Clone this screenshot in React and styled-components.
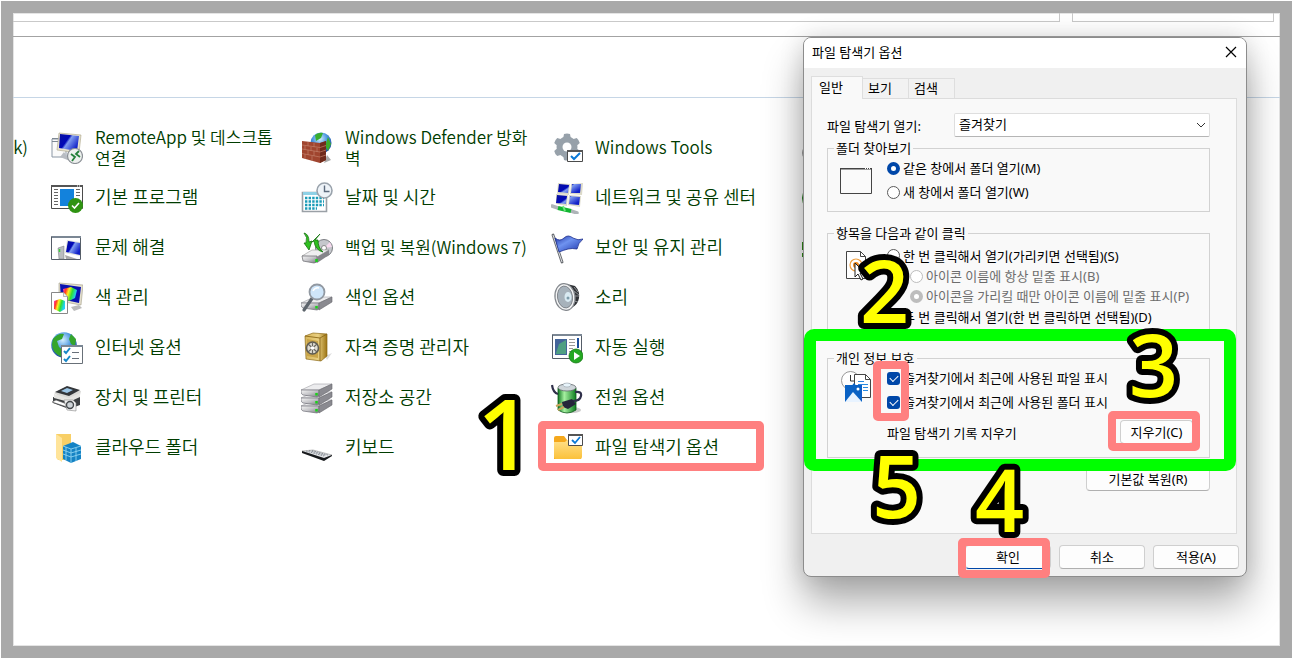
import React from 'react';
import styled, { createGlobalStyle } from 'styled-components';

const GlobalStyle = createGlobalStyle`
  * {
    box-sizing: border-box;
  }

  body {
    margin: 0;
    background: #fff;
    font-family: 'Noto Sans', 'Noto Sans CJK KR', sans-serif;
  }
`;

const Page = styled.div`
  height: 100vh;
  padding: 1px 1px 2px;
`;

const Frame = styled.main`
  position: relative;
  height: 100%;
  overflow: hidden;
  border: 12px solid #a9a9a9;
  background: #fff;
  box-shadow: inset 0 0 0 1px #e4e4e4;
`;

const TopStrip = styled.div`
  display: flex;
  gap: 12px;
  height: 24px;
  padding: 0 6px 14px 0;
  border-bottom: 1px solid #a3a3a3;
`;

const StripBox = styled.div`
  flex: ${(props) => (props.$fill ? '1' : '0 0 202px')};
  border: 1px solid #c9c9c9;
  border-top: 0;
  border-left-width: ${(props) => (props.$fill ? '0' : '1px')};
`;

const Banner = styled.div`
  height: 61px;
  border-bottom: 1px solid #c6d6e6;
`;

const ItemGrid = styled.div`
  display: grid;
  grid-template-columns: 38px repeat(4, 250px);
  grid-template-rows: repeat(7, 50px);
  grid-auto-flow: column;
  padding-top: 25px;
  color: #003c00;
  font-family: 'Noto Sans CJK KR', 'Noto Sans', sans-serif;
  font-size: 18px;
  font-weight: 350;
`;

const CutItem = styled.div`
  display: flex;
  grid-row: 1 / 8;
  justify-content: flex-end;
  height: 48px;
  padding-right: 23px;
  overflow: hidden;
  font-size: 17px;
  line-height: 48px;
`;

const Item = styled.a`
  position: relative;
  display: flex;
  align-items: center;
  gap: 12px;
  color: inherit;
  line-height: 21px;
  text-decoration: none;
  white-space: pre-line;
`;

const ItemText = styled.span`
  padding-bottom: 3px;
  font-size: ${(props) => (props.$latin ? 17 : 18)}px;
`;

const ItemIcon = styled.svg`
  flex: none;
  width: 32px;
  height: 32px;
`;

const Highlight = styled.div`
  position: absolute;
  left: ${(props) => props.$left}px;
  top: ${(props) => props.$top}px;
  width: ${(props) => props.$width}px;
  height: ${(props) => props.$height}px;
  border: ${(props) => (props.$green ? '12px solid #00ff00' : '8px solid #ff8080')};
  border-radius: ${(props) => (props.$green ? 10 : 5)}px;
  pointer-events: none;
`;

const StepSvg = styled.svg`
  position: absolute;
  left: ${(props) => props.$left}px;
  top: ${(props) => props.$top}px;
  width: 70px;
  height: 90px;
  overflow: visible;
  pointer-events: none;

  text {
    fill: #ffff00;
    stroke: #000;
    stroke-width: 12px;
    stroke-linejoin: round;
    paint-order: stroke;
    font-family: 'Open Sans', 'Noto Sans', sans-serif;
    font-weight: 600;
  }
`;

const Dialog = styled.section`
  position: absolute;
  top: 24px;
  right: 33px;
  width: 444px;
  border: 1px solid #8c8c8c;
  border-radius: 8px;
  background: #f0f0f0;
  box-shadow: 0 26px 40px rgba(0, 0, 0, 0.32), 0 0 24px rgba(0, 0, 0, 0.14);
  color: #000;
  font-size: 13px;
`;

const TitleBar = styled.header`
  display: flex;
  align-items: center;
  justify-content: space-between;
  height: 30px;
  padding: 0 8px 2px;
  border-radius: 7px 7px 0 0;
  background: #fff;
`;

const Title = styled.h1`
  margin: 0;
  font-size: 13px;
  font-weight: 400;
  line-height: 18px;
`;

const CloseButton = styled.button`
  display: flex;
  padding: 1px;
  border: 0;
  background: none;
`;

const TabList = styled.div`
  display: flex;
  align-items: flex-end;
  height: 30px;
  padding: 8px 7px 0;
`;

const Tab = styled.button`
  z-index: ${(props) => (props.$active ? 1 : 0)};
  width: ${(props) => (props.$active ? 52 : 46)}px;
  height: ${(props) => (props.$active ? 23 : 20)}px;
  margin-bottom: ${(props) => (props.$active ? -1 : 0)}px;
  padding: 0 0 2px ${(props) => (props.$active ? 7 : 5)}px;
  border: 1px solid #dedede;
  border-bottom: 0;
  border-left-width: ${(props) => (props.$active ? 1 : 0)}px;
  background: ${(props) => (props.$active ? '#f9f9f9' : '#f2f2f2')};
  color: #000;
  font: inherit;
  line-height: 18px;
  text-align: left;
`;

const TabPanel = styled.div`
  margin: 0 9px 0 7px;
  padding: 14px 26px 42px 15px;
  border: 1px solid #dcdcdc;
  background: #f9f9f9;
`;

const OpenRow = styled.div`
  display: flex;
  align-items: center;
  justify-content: space-between;
  height: 24px;
  margin-bottom: 3px;
`;

const SelectBox = styled.div`
  position: relative;
  width: 256px;

  select {
    display: block;
    width: 100%;
    height: 24px;
    padding: 0 4px 2px;
    appearance: none;
    border: 1px solid #dedede;
    border-bottom-color: #b5b5b5;
    border-radius: 2px;
    background: #fff;
    color: #000;
    font: inherit;
  }

  svg {
    position: absolute;
    top: 8px;
    right: 4px;
    pointer-events: none;
  }
`;

const Group = styled.fieldset`
  min-width: 0;
  margin: 0 0 13px;
  padding: 0 16px ${(props) => props.$bottom || 7}px 12px;
  border: 1px solid #d2d2d2;

  legend {
    height: 16px;
    margin-left: -6px;
    padding: 0 2px;
    line-height: 16px;
  }
`;

const GroupBody = styled.div`
  display: flex;
  gap: 15px;
  padding-top: ${(props) => props.$top || 0}px;
`;

const GroupIcon = styled.svg`
  flex: none;
  width: 32px;
  height: 40px;
`;

const Options = styled.div`
  flex: 1;
  min-width: 0;
`;

const Option = styled.label`
  display: flex;
  align-items: center;
  gap: 3px;
  height: ${(props) => props.$height || 24}px;
  padding-left: ${(props) => (props.$sub ? 23 : 0)}px;
  color: ${(props) => (props.$sub ? '#6d6d6d' : '#000')};
  line-height: 16px;
  white-space: nowrap;
`;

const Radio = styled.input`
  flex: none;
  width: 13px;
  height: 13px;
  margin: 0;
  appearance: none;
  border: 1px solid #5a5a5a;
  border-radius: 50%;
  background: #fff;

  &:checked {
    border: 4px solid #0047a8;
  }

  &:disabled {
    border-color: #bdbdbd;
  }
`;

const Checkbox = styled.input`
  position: relative;
  flex: none;
  width: 13px;
  height: 13px;
  margin: 0;
  appearance: none;
  border-radius: 3px;
  background: #0047a8;

  &:checked::after {
    content: '';
    position: absolute;
    left: 3px;
    top: 3px;
    width: 7px;
    height: 4px;
    border: solid #fff;
    border-width: 0 0 1px 1px;
    transform: rotate(-45deg);
  }
`;

const ClearRow = styled.div`
  display: flex;
  align-items: center;
  justify-content: space-between;
  margin-top: 6px;
`;

const Button = styled.button`
  width: ${(props) => props.$width || 86}px;
  height: 24px;
  padding: 0 0 2px;
  border: 1px solid #cfcfcf;
  border-bottom-color: ${(props) => (props.$primary ? '#0047a8' : '#b0b0b0')};
  border-radius: 4px;
  background: #fdfdfd;
  color: #000;
  font: inherit;
`;

const RestoreRow = styled.div`
  display: flex;
  justify-content: flex-end;
  margin-top: -4px;
`;

const Footer = styled.footer`
  display: flex;
  justify-content: flex-end;
  gap: 8px;
  padding: 11px 7px 7px;
`;

const gradients = (
  <svg width="0" height="0" style={{ position: 'absolute' }} aria-hidden="true">
    <defs>
      <linearGradient id="screen" x1="0" y1="0" x2="1" y2="0.6">
        <stop offset="0" stopColor="#0a12a0" />
        <stop offset="0.45" stopColor="#0008b8" />
        <stop offset="0.55" stopColor="#7f9cf0" />
        <stop offset="1" stopColor="#1020c8" />
      </linearGradient>
      <radialGradient id="globe" cx="0.45" cy="0.3" r="0.75">
        <stop offset="0" stopColor="#d4f0ff" />
        <stop offset="0.45" stopColor="#4d98e0" />
        <stop offset="1" stopColor="#123a94" />
      </radialGradient>
      <linearGradient id="metal" x1="0" y1="0" x2="1" y2="1">
        <stop offset="0" stopColor="#f6f6f6" />
        <stop offset="0.5" stopColor="#c4c4c8" />
        <stop offset="1" stopColor="#77777d" />
      </linearGradient>
      <linearGradient id="folder" x1="0" y1="0" x2="0" y2="1">
        <stop offset="0" stopColor="#ffe08a" />
        <stop offset="1" stopColor="#fbc13a" />
      </linearGradient>
      <linearGradient id="gold" x1="0" y1="0" x2="1" y2="0">
        <stop offset="0" stopColor="#d8b75c" />
        <stop offset="0.6" stopColor="#e9cf80" />
        <stop offset="1" stopColor="#9c7414" />
      </linearGradient>
      <linearGradient id="green" x1="0" y1="0" x2="1" y2="0">
        <stop offset="0" stopColor="#127a24" />
        <stop offset="0.35" stopColor="#a6f0a0" />
        <stop offset="1" stopColor="#0d7d1f" />
      </linearGradient>
      <linearGradient id="rainbow" x1="0" y1="0" x2="1" y2="0.3">
        <stop offset="0" stopColor="#ff38e0" />
        <stop offset="0.25" stopColor="#ff3b20" />
        <stop offset="0.45" stopColor="#ffee20" />
        <stop offset="0.7" stopColor="#30e030" />
        <stop offset="1" stopColor="#20d0ff" />
      </linearGradient>
      <linearGradient id="flag" x1="0" y1="0" x2="1" y2="1">
        <stop offset="0" stopColor="#1c2fa0" />
        <stop offset="0.4" stopColor="#6f93f0" />
        <stop offset="1" stopColor="#1830a8" />
      </linearGradient>
    </defs>
  </svg>
);

const disk = (y) => (
  <g key={y} transform={`translate(0 ${y})`}>
    <path d="M0 7 13 1h18l-13 6z" fill="#ececee" stroke="#a0a0a4" strokeWidth=".6" />
    <path d="M0 7h18v6l-2 1-14-2q-2-1-2-3z" fill="url(#metal)" stroke="#707078" strokeWidth=".7" />
    <path d="M18 7 31 1v5L18 14z" fill="#8a8a90" stroke="#66666c" strokeWidth=".6" />
    <path d="M15.500 10v2.500" stroke="#19d219" strokeWidth="2.500" />
  </g>
);

const icons = {
  remote: (
    <>
      <path d="M1 7h14v18H1z" fill="#fafafa" stroke="#8a96a4" />
      <path d="M1 9.500h8M1 6.500h8" stroke="#7d8894" />
      <path d="m8 1 22 2-2 18-22-3z" fill="#e8e3cf" stroke="#a9a387" strokeWidth=".6" />
      <path d="m9 2 19 2-2 15-18-3z" fill="url(#screen)" />
      <path d="m13 20-4 5 10 4z" fill="#b8bcc2" />
      <circle cx="24" cy="24" r="7.500" fill="#edf0ee" stroke="#8b9096" strokeWidth="1.200" />
      <path d="m20 22 4 3-3 4M28 19l-3 3 4 3" fill="none" stroke="#24803a" strokeWidth="1.800" />
    </>
  ),
  programs: (
    <>
      <path d="M.5 3.500h31v23H.5z" fill="#fff" stroke="#4b4b4b" />
      <path d="M0 3h32v2H0z" fill="#555" />
      <path d="M26 4h1m1 0h1" stroke="#fff" />
      <path d="M3 7.500h4M3 10.500h4M3 13.500h4M3 16.500h4M3 19.500h4M3 22.500h4M25 7.500h4M25 10.500h4M25 13.500h4" stroke="#666" />
      <path d="M9 7h14v17H9z" fill="#1382dc" />
      <circle cx="24.500" cy="23.500" r="7.500" fill="#2f9312" />
      <path d="m21 23.500 2.500 2.500 4.500-5" fill="none" stroke="#fff" strokeWidth="1.600" />
    </>
  ),
  trouble: (
    <>
      <path d="M.5 4.500h29v23H.5z" fill="#fff" stroke="#555d68" />
      <path d="M1 4h29v2H1z" fill="#7b8794" />
      <path d="m16 8 13 2v14l-15-3z" fill="#e2e2dc" />
      <path d="m17 9 12 2v12l-14-3z" fill="url(#screen)" />
      <path d="m7 16 6-2v13H8z" fill="#b9bcc0" stroke="#77797d" strokeWidth=".5" />
      <path d="M8.500 17v3" stroke="#3bd03b" strokeWidth="1.500" />
      <path d="m14 23 12 4H15z" fill="#a8a8aa" />
    </>
  ),
  color: (
    <>
      <path d="m8 1 24 2-2 20-22-4z" fill="#e4dfcd" stroke="#a29d87" strokeWidth=".6" />
      <path d="m9 2 21 3-2 16-18-4z" fill="#0a12b0" />
      <path d="m12 7 8-2 6 3-2 8-6 3-5-5z" fill="url(#rainbow)" />
      <path d="m20 25 8-2 3 3-8 3z" fill="#bbb" />
      <path d="M.5 10.500h12l4 4v17H.5z" fill="#fff" stroke="#888" />
      <path d="M12.500 10.500v4h4" fill="#eee" stroke="#999" strokeWidth=".7" />
      <path d="m3 19 6-2 5 2v8l-5 3-6-3z" fill="url(#rainbow)" />
    </>
  ),
  internet: (
    <>
      <circle cx="13" cy="13" r="12.800" fill="url(#globe)" />
      <path d="M2 7Q7 1 13 2l-2 5-5 2 2 6 5 4-2 6Q1 21 1 12zM20 2l5 5-1 7-4-2-2-5z" fill="#35a52c" />
      <path d="M10.500 13.500h21v18h-21z" fill="#fff" stroke="#687078" />
      <path d="M10 13h22v2H10z" fill="#7b8794" />
      <path d="m13 19 2 2 4-5m-6 11 2 2 4-5" fill="none" stroke="#1687c8" strokeWidth="2" />
      <path d="M21 20.500h7M21 26.500h7" stroke="#68707a" />
    </>
  ),
  printer: (
    <>
      <path d="m3 11 12-6 15 4-2 8-11 3z" fill="#d9d9d6" />
      <path d="m4 10 12-6 13 4-11 6z" fill="#33363a" />
      <path d="m10 9 6-3 6 2-6 3z" fill="#9cc6e6" />
      <path d="m2 15 16 4 11-5v9l-11 4-16-6z" fill="#3d4043" />
      <path d="m3 12 15 4 11-5v4l-11 5-15-4z" fill="#e5e5e2" />
      <path d="m5 18 11 4v3L1 20z" fill="#fff" stroke="#555" strokeWidth=".6" />
      <path d="M13 18h9l3 3v8l-9-1z" fill="#f2f2f2" stroke="#888" strokeWidth=".6" />
      <circle cx="19" cy="23" r="3.500" fill="#cfd4d8" stroke="#44484c" strokeWidth="1.400" />
    </>
  ),
  cloud: (
    <>
      <path d="M5 2h15v26H7l-2-3z" fill="#f8cf66" />
      <path d="m5 2 6 4v24l-6-4z" fill="#ffe49a" />
      <path d="m12 14 10-4 8 4v13l-10 4-8-4z" fill="#1583c4" />
      <path d="m12 14 8 3 10-3M12 18l8 3 10-3M12 22l8 3 10-3M20 17v14M15 15v13M25 16v13" fill="none" stroke="#8fd4f2" strokeWidth=".9" />
    </>
  ),
  firewall: (
    <>
      <circle cx="20" cy="11" r="10.500" fill="url(#globe)" />
      <path d="M14 3q4-3 8-2l-2 5-5 3zM27 5l3 7-3 7-3-5z" fill="#39ad2d" />
      <path d="m26 23 4 5-7 3z" fill="#aaa" />
      <path d="m1 9 18 2 6-2v19l-6 3-18-5z" fill="#a0452f" />
      <path d="m19 11 6-2v19l-6 3z" fill="#6f2b1c" />
      <path d="m1 13 18 2.500 6-2M1 17l18 3 6-2M1 21.500l18 3.500 6-2M7 10v4m6-3v4M4 14v4m6-3v4m6-3v4M7 18v5m6-4v5M4 22v5m7-3v5" fill="none" stroke="#c27f6a" strokeWidth=".7" />
    </>
  ),
  date: (
    <>
      <path d="M1.500 10.500h24v19h-24z" fill="#fff" stroke="#9aa0a6" strokeWidth="1.600" />
      <path d="M2 10h20v3H2z" fill="#8fd1e6" />
      <path d="M4 16h19M4 19.500h19M4 23h19M4 26.500h12" stroke="#1c9cb8" strokeWidth="2.400" strokeDasharray="2.400 1.200" />
      <circle cx="23.500" cy="8.500" r="7.500" fill="#eef3f8" stroke="#9aa3ac" strokeWidth="1.600" />
      <path d="M23.500 3.500v6h5" fill="none" stroke="#5c6a7c" strokeWidth="1.400" />
    </>
  ),
  backup: (
    <>
      <circle cx="23" cy="16" r="8.500" fill="#c5c7cc" stroke="#7b7d82" />
      <path d="m23 16 6-6 2 5z" fill="#f7d9ee" />
      <circle cx="23" cy="16" r="2.500" fill="#fff" stroke="#888" />
      <path d="m1 24 10-6h17l-12 7z" fill="#efeff0" stroke="#999" strokeWidth=".6" />
      <path d="M1 24h15v6l-3 1-11-2z" fill="url(#metal)" stroke="#66666c" strokeWidth=".7" />
      <path d="m16 25 12-7v5l-12 8z" fill="#85858a" />
      <path d="M15.500 27v3" stroke="#18cf18" strokeWidth="2.500" />
      <path d="M3 1q5 1 5 9l3-1-3 9-5-7 2 0Q7 5 3 1z" fill="#30c020" stroke="#14720f" strokeWidth=".8" />
      <path d="m19 2-5 6h3q0 8 5 12-8-2-9-11l-2 1z" fill="#30c020" stroke="#14720f" strokeWidth=".8" />
    </>
  ),
  index: (
    <>
      <g transform="translate(0 14)">{disk(0)}</g>
      <path d="m12 15-9 13" stroke="#5d646c" strokeWidth="3.200" strokeLinecap="round" />
      <circle cx="16" cy="10" r="7.500" fill="#cfe6fa" stroke="#9299a2" strokeWidth="1.800" />
      <path d="M12 9q2-4 6-3" fill="none" stroke="#fff" strokeWidth="1.500" />
    </>
  ),
  safe: (
    <>
      <path d="m24 24 7-3-5 7z" fill="#ddd" />
      <path d="m4 4 8-3 14 1v22l-6 5-15-2z" fill="url(#gold)" stroke="#8d6a18" strokeWidth=".7" />
      <path d="m4 4 15 2 7-4M19 6v23" fill="none" stroke="#8d6a18" strokeWidth=".9" />
      <path d="m6 7 11 2v17L6 24z" fill="#caa548" />
      <circle cx="11.500" cy="16" r="6" fill="#dedcd2" stroke="#5f5b50" strokeWidth="1.600" />
      <path d="m7 12 9 8m0-8-9 8M11.500 10v12" stroke="#6a675f" strokeWidth="1.200" />
      <circle cx="11.500" cy="16" r="1.800" fill="#fff" />
    </>
  ),
  storage: <>{[17, 9, 1].map(disk)}</>,
  keyboard: (
    <>
      <path d="m1 19 11-1 19 5-8 4z" fill="#e3e5e8" stroke="#999" strokeWidth=".6" />
      <path d="m1 19 22 7 8-3v1l-8 5-22-8z" fill="#17191c" />
      <path d="m5 19 18 5M8 18.500l17 5M11 18.500l16 4.500" stroke="#7f858c" strokeWidth=".9" strokeDasharray="1.600 .9" />
    </>
  ),
  tools: (
    <>
      <g fill="#97a1aa">
        <circle cx="16" cy="15" r="10.500" />
        {[0, 60, 120, 180, 240, 300].map((angle) => (
          <path key={angle} d="m13 2-1 5h8l-1-5q-3-1-6 0z" transform={`rotate(${angle} 16 15)`} />
        ))}
      </g>
      <circle cx="16" cy="15" r="4.500" fill="#fff" />
      <path d="M16.500 18.500h15v11h-15z" fill="#fff" stroke="#4b4b4b" />
      <path d="M16 18h16v2H16z" fill="#555" />
      <path d="m20 24 3 3 6-6" fill="none" stroke="#0a78d6" strokeWidth="2" />
    </>
  ),
  network: (
    <>
      <path d="m7 1 12 1-1 11-12-1zM20 2l12-1-1 12-12-1z" fill="#dcdac9" />
      <path d="m8 2 10 1-1 8-10-1zM21 2l9 0-1 9-9 0z" fill="url(#screen)" />
      <path d="m5 12 12 1-1 11-11-2zM18 13l12 1-1 11-12-2z" fill="#dcdac9" />
      <path d="m6 13 10 1-1 8-10-1zM19 14l10 1-1 8-10-1z" fill="url(#screen)" />
      <path d="m1 24 6 2M20 29l6 2" stroke="#aeb4b8" strokeWidth="3.500" strokeLinecap="round" />
      <path d="m7 26 13 3" stroke="#12b532" strokeWidth="4" />
      <path d="m12 24 2 5" stroke="#6dea7c" strokeWidth="2" />
    </>
  ),
  flagIcon: (
    <>
      <path d="m2 3 9 27" stroke="#6a6d72" strokeWidth="2.800" strokeLinecap="round" />
      <path d="m2 3 9 27" stroke="#d8dadd" strokeWidth="1" />
      <path d="M4 6q5 4 9 0t9 0q5 3 10 1-5 4-6 10-5-1-9 0t-9 3z" fill="url(#flag)" stroke="#1a2c8c" strokeWidth=".8" />
    </>
  ),
  sound: (
    <>
      <path d="m16 2 8 2q5 5 4 12t-8 10l-6 2z" fill="#2e3034" />
      <path d="m23 5 4 5M23 9l5 4M24 14h4M23 19l4 1" stroke="#8d9094" />
      <ellipse cx="14" cy="15" rx="10" ry="13.500" fill="#f2f3f4" stroke="#85898e" strokeWidth="1.200" transform="rotate(-8 14 15)" />
      <ellipse cx="14" cy="15" rx="7.500" ry="11" fill="#a7b2bb" stroke="#74797e" strokeWidth=".8" transform="rotate(-8 14 15)" />
      <ellipse cx="17" cy="15" rx="3.500" ry="5" fill="#d9eaf2" />
      <circle cx="17" cy="16" r="1.500" fill="#7d9cab" />
    </>
  ),
  autoplay: (
    <>
      <path d="M1.500 2.500h29v24h-29z" fill="#fff" stroke="#555d68" />
      <path d="M2 2h29v2H2z" fill="#7b8794" />
      <path d="M4 7h12v16H4z" fill="#44659a" />
      <path d="m5 21 3-9 7-4v14H5z" fill="#4fa083" />
      <path d="M18 7.500h6M18 10.500h6M18 13.500h6M18 16.500h4M18 19.500h3" stroke="#999" />
      <path d="M26 6h2v10h-2z" fill="#1c4d9c" />
      <circle cx="25" cy="24" r="7" fill="#24a822" stroke="#167815" strokeWidth=".8" />
      <path d="m23 20 6 4-6 4z" fill="#fff" />
    </>
  ),
  power: (
    <>
      <ellipse cx="22" cy="28" rx="8" ry="3" fill="#ccc" />
      <path d="M7 6h18v22q-9 6-18 0z" fill="url(#green)" stroke="#0d5a19" strokeWidth=".8" />
      <ellipse cx="16" cy="5.500" rx="9" ry="3.500" fill="#cfd6da" stroke="#62686c" strokeWidth=".8" />
      <ellipse cx="16" cy="3" rx="4" ry="2" fill="#e8f4fb" stroke="#89939a" strokeWidth=".5" />
      <path d="M1 3q1 8 6 9M24 10q7-1 6 4t-8 5" fill="none" stroke="#30304a" strokeWidth="2.200" />
      <path d="m11 20 10-3 4 5-8 5-5-2z" fill="#25253a" />
      <path d="m11 22-6 2m8 1-6 3" stroke="#caa65c" strokeWidth="2" />
    </>
  ),
  folderOptions: (
    <>
      <path d="M3 6q0-2 2-2h8l3 4h14v19H3z" fill="#f5a81c" />
      <path d="M3 10h11l2-2h15v17q0 2-2 2H5q-2 0-2-2z" fill="url(#folder)" />
      <path d="M17.500 2.500h14v11h-14z" fill="#fff" stroke="#4b4b4b" />
      <path d="M17 2h15v2H17z" fill="#555" />
      <path d="m21 8 3 3 5-6" fill="none" stroke="#0a78d6" strokeWidth="1.800" />
    </>
  ),
  clock: <circle cx="9" cy="21" r="8" fill="#999" />,
  greenGlobe: <ellipse cx="11" cy="16" rx="10" ry="12" fill="#1f7a18" />,
  greenArrow: <path d="M1 10h12v4H6v8h5v3H1v-4h3v-3H1z" fill="#2d8a14" />,
};

const columns = [
  [
    ['remote', 'RemoteApp 및 데스크톱\n연결'],
    ['programs', '기본 프로그램'],
    ['trouble', '문제 해결'],
    ['color', '색 관리'],
    ['internet', '인터넷 옵션'],
    ['printer', '장치 및 프린터'],
    ['cloud', '클라우드 폴더'],
  ],
  [
    ['firewall', 'Windows Defender 방화\n벽'],
    ['date', '날짜 및 시간'],
    ['backup', '백업 및 복원(Windows 7)'],
    ['index', '색인 옵션'],
    ['safe', '자격 증명 관리자'],
    ['storage', '저장소 공간'],
    ['keyboard', '키보드'],
  ],
  [
    ['tools', 'Windows Tools'],
    ['network', '네트워크 및 공유 센터'],
    ['flagIcon', '보안 및 유지 관리'],
    ['sound', '소리'],
    ['autoplay', '자동 실행'],
    ['power', '전원 옵션'],
    ['folderOptions', '파일 탐색기 옵션'],
  ],
  [
    ['clock', ''],
    ['greenGlobe', ''],
    ['greenArrow', ''],
  ],
];

const Step = ({ n, left, top, size = 86 }) => (
  <StepSvg $left={left} $top={top}>
    <text x="6" y="80" fontSize={size}>{n}</text>
  </StepSvg>
);

const ControlPanel = () => (
  <ItemGrid>
    <CutItem>ok)</CutItem>
    {columns.flat().map(([icon, text]) => (
      <Item key={icon} href="#">
        <ItemIcon viewBox="0 0 32 32">{icons[icon]}</ItemIcon>
        {text && <ItemText $latin={/[a-z]/i.test(text)}>{text}</ItemText>}
        {icon === 'folderOptions' && (
          <>
            <Highlight $left={-13} $top={-2} $width={226} $height={50} />
            <Step n="1" left={-80} top={-33} size={98} />
          </>
        )}
      </Item>
    ))}
  </ItemGrid>
);

const FolderOptions = () => (
  <Dialog role="dialog" aria-labelledby="dialog-title">
    <TitleBar>
      <Title id="dialog-title">파일 탐색기 옵션</Title>
      <CloseButton type="button" aria-label="닫기">
        <svg width="12" height="12" viewBox="0 0 12 12">
          <path d="m1 1 10 10M11 1 1 11" stroke="#000" strokeWidth="1.200" />
        </svg>
      </CloseButton>
    </TitleBar>

    <TabList role="tablist">
      <Tab type="button" role="tab" aria-selected="true" $active>일반</Tab>
      <Tab type="button" role="tab">보기</Tab>
      <Tab type="button" role="tab">검색</Tab>
    </TabList>

    <TabPanel role="tabpanel">
      <OpenRow>
        <label htmlFor="open-to">파일 탐색기 열기:</label>
        <SelectBox>
          <select id="open-to" defaultValue="favorites">
            <option value="favorites">즐겨찾기</option>
          </select>
          <svg width="10" height="8" viewBox="0 0 10 8">
            <path d="m1 2 4 4 4-4" fill="none" stroke="#333" />
          </svg>
        </SelectBox>
      </OpenRow>

      <Group>
        <legend>폴더 찾아보기</legend>
        <GroupBody>
          <GroupIcon viewBox="0 0 32 40">
            <path d="M.5 12.500h31v25H.5z" fill="#fafafa" stroke="#444" />
            <path d="M0 12h32v1.500H0z" fill="#444" />
            <path d="M25 12.500h5" stroke="#fff" strokeDasharray="1 1" />
          </GroupIcon>
          <Options>
            <Option>
              <Radio type="radio" name="browse" defaultChecked />
              같은 창에서 폴더 열기(M)
            </Option>
            <Option>
              <Radio type="radio" name="browse" />
              새 창에서 폴더 열기(W)
            </Option>
          </Options>
        </GroupBody>
      </Group>

      <Group $bottom={9}>
        <legend>항목을 다음과 같이 클릭</legend>
        <GroupBody $top={4}>
          <GroupIcon viewBox="0 0 32 40">
            <path d="M6.500 6.500h14l5 5v22h-19z" fill="#fff" stroke="#444" />
            <path d="M20.500 6.500v5h5" fill="none" stroke="#444" />
            <circle cx="16" cy="20" r="6" fill="none" stroke="#f0a040" strokeWidth="1.200" />
            <circle cx="16" cy="20" r="3" fill="#f08a1c" />
            <path d="M15 18v14l3-3 3 6 2-1-3-6h5z" fill="#fff" stroke="#222" />
          </GroupIcon>
          <Options>
            <Option $height={21}>
              <Radio type="radio" name="click" />
              한 번 클릭해서 열기(가리키면 선택됨)(S)
            </Option>
            <Option $height={20} $sub>
              <Radio type="radio" name="underline" disabled />
              아이콘 이름에 항상 밑줄 표시(B)
            </Option>
            <Option $height={20} $sub>
              <Radio type="radio" name="underline" disabled defaultChecked />
              아이콘을 가리킬 때만 아이콘 이름에 밑줄 표시(P)
            </Option>
            <Option $height={21}>
              <Radio type="radio" name="click" defaultChecked />
              두 번 클릭해서 열기(한 번 클릭하면 선택됨)(D)
            </Option>
          </Options>
        </GroupBody>
      </Group>

      <Group $bottom={13}>
        <legend>개인 정보 보호</legend>
        <GroupBody>
          <GroupIcon viewBox="0 0 32 40">
            <circle cx="10.500" cy="14.500" r="9" fill="#fff" stroke="#999" />
            <path d="M10.500 9v6h5" fill="none" stroke="#333" />
            <path d="M14.500 8.500h11l5 5v18h-16z" fill="#fff" stroke="#444" />
            <path d="M25.500 8.500v5h5" fill="none" stroke="#444" />
            <path d="M18 15.500h6M18 18.500h10M23 21.500h5M23 24.500h5" stroke="#2a8ae0" />
            <path d="M5 19h17v17H5z" fill="#0a62c4" />
            <path d="m5 36 8-10 9 10z" fill="#e8f3ff" />
            <path d="m10 22 4-5 4 5z" fill="#0a62c4" />
            <circle cx="18" cy="23" r="1.500" fill="#fff" />
          </GroupIcon>
          <Options>
            <Option>
              <Checkbox type="checkbox" defaultChecked />
              즐겨찾기에서 최근에 사용된 파일 표시
            </Option>
            <Option>
              <Checkbox type="checkbox" defaultChecked />
              즐겨찾기에서 최근에 사용된 폴더 표시
            </Option>
            <ClearRow>
              <span>파일 탐색기 기록 지우기</span>
              <Button type="button" $width={73}>지우기(C)</Button>
            </ClearRow>
          </Options>
        </GroupBody>
      </Group>

      <RestoreRow>
        <Button type="button" $width={124}>기본값 복원(R)</Button>
      </RestoreRow>
    </TabPanel>

    <Footer>
      <Button type="button" $primary>확인</Button>
      <Button type="button">취소</Button>
      <Button type="button">적용(A)</Button>
    </Footer>

    <Step n="2" left={50} top={205} />
    <Highlight $green $left={0} $top={291} $width={432} $height={142} />
    <Highlight $left={69} $top={323} $width={36} $height={60} />
    <Highlight $left={304} $top={373} $width={92} $height={40} />
    <Highlight $left={154} $top={500} $width={92} $height={40} />
    <Step n="3" left={319} top={279} />
    <Step n="5" left={62} top={400} />
    <Step n="4" left={165} top={414} />
  </Dialog>
);

const App = () => {
  return (
    <Page>
      <GlobalStyle />
      {gradients}
      <Frame>
        <TopStrip>
          <StripBox $fill />
          <StripBox />
        </TopStrip>
        <Banner />
        <ControlPanel />
        <FolderOptions />
      </Frame>
    </Page>
  )
}

export default App;
